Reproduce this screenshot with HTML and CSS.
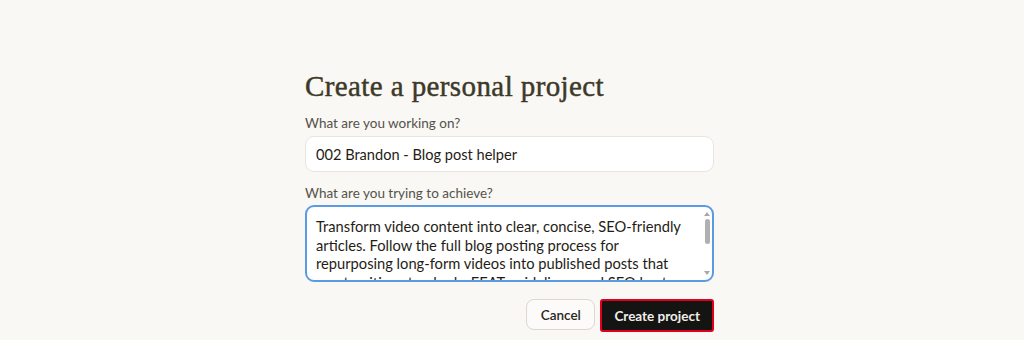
FILE: index.html
```html
<!DOCTYPE html>
<html>
<head>
<meta charset="utf-8">
<link rel="stylesheet" href="styles.css">
</head>
<body>
<main class="page">
  <form class="card">
    <h1 class="title">Create a personal project</h1>
    <label class="label" for="name">What are you working on?</label>
    <input id="name" class="input" type="text" value="002 Brandon - Blog post helper">
    <label class="label label-2" for="goal">What are you trying to achieve?</label>
    <div class="textarea-wrap">
      <textarea id="goal" class="textarea">Transform video content into clear, concise, SEO-friendly articles. Follow the full blog posting process for repurposing long-form videos into published posts that meet writing standards, EEAT guidelines, and SEO best practices. Keep the brand voice consistent throughout.</textarea>
      <div class="scrollbar" aria-hidden="true">
        <span class="arrow arrow-up"></span>
        <span class="thumb"></span>
        <span class="arrow arrow-down"></span>
      </div>
    </div>
    <div class="actions">
      <button type="button" class="btn btn-cancel">Cancel</button>
      <button type="button" class="btn btn-create">Create project</button>
    </div>
  </form>
</main>
</body>
</html>
```

FILE: styles.css
```css
html, body {
  margin: 0;
  padding: 0;
  background: #f9f8f5;
}
body {
  font-family: "Lato", "Noto Sans", sans-serif;
  color: #29261b;
}
.page {
  display: flex;
  justify-content: center;
  padding: 66px 5px 0 0;
}
.card {
  width: 409px;
  display: flex;
  flex-direction: column;
}
.title {
  margin: 0 0 9px;
  font-family: "Liberation Serif", "DejaVu Serif", serif;
  font-weight: 400;
  font-size: 29px;
  letter-spacing: 0.4px;
  line-height: 40px;
  color: #3d3929;
  -webkit-text-stroke: 0.45px #3d3929;
}
.label {
  font-size: 13.5px;
  line-height: 16px;
  color: #555249;
  margin-bottom: 5px;
}
.label-2 {
  margin-top: 13px;
  margin-bottom: 4px;
}
.input {
  box-sizing: border-box;
  height: 36px;
  border: 1px solid #e8e5de;
  border-radius: 9px;
  background: #fff;
  padding: 0 10px;
  font-family: inherit;
  font-size: 14.6px;
  color: #1f1d16;
  outline: none;
}
.textarea-wrap {
  position: relative;
  display: flex;
}
.textarea {
  flex: 1;
  box-sizing: border-box;
  height: 77px;
  border: 2px solid #5b9be3;
  border-radius: 9px;
  background: #fff;
  padding: 10px 16px 0 9px;
  font-family: inherit;
  font-size: 14.7px;
  line-height: 18.5px;
  color: #1f1d16;
  resize: none;
  outline: none;
  overflow: hidden;
}
.scrollbar {
  position: absolute;
  top: 5px;
  bottom: 5px;
  right: 3px;
  width: 8px;
  display: flex;
  flex-direction: column;
  align-items: center;
}
.arrow {
  width: 0;
  height: 0;
  border-left: 3px solid transparent;
  border-right: 3px solid transparent;
}
.arrow-up {
  border-bottom: 4px solid #a8a8a8;
  margin-top: 2px;
}
.arrow-down {
  border-top: 4px solid #a8a8a8;
  margin-top: auto;
  margin-bottom: 2px;
}
.thumb {
  width: 5px;
  height: 25px;
  margin-top: 3px;
  border-radius: 3px;
  background: #b0b0b0;
}
.actions {
  display: flex;
  justify-content: flex-end;
  align-items: flex-start;
  gap: 5px;
  margin-top: 17px;
}
.btn {
  font-family: inherit;
  font-size: 13.5px;
  font-weight: 700;
  border-radius: 8px;
  cursor: pointer;
}
.btn-cancel {
  height: 31px;
  background: #fcfbf9;
  border: 1px solid #dcd8cf;
  color: #29261b;
  padding: 0 13.5px;
  font-weight: 600;
}
.btn-create {
  background: #141413;
  color: #f0efea;
  border: 2px solid #e0001b;
  border-radius: 3px;
  padding: 0 12px;
  height: 33px;
}
```
